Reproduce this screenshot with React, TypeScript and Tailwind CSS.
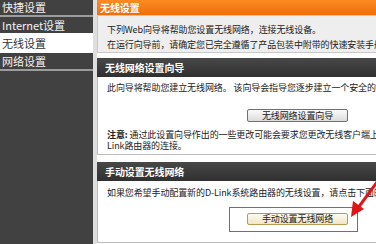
const cjk = "font-['Noto_Sans_CJK_SC','Noto_Sans',sans-serif]"

function NavItem({ label, active }: { label: string; active?: boolean }) {
  return (
    <div
      className={
        active
          ? 'h-[20px] leading-[20px] pl-[2px] text-[11px] bg-white text-[#333]'
          : 'h-[16px] leading-[16px] pl-[2px] text-[11px] text-[#f2f2f2]'
      }
    >
      {label}
    </div>
  )
}

function SectionHeader({ title }: { title: string }) {
  return (
    <div className="h-[19px] leading-[19px] pl-[8px] text-[10px] font-bold text-white bg-gradient-to-b from-[#484848] to-[#303030]">
      {title}
    </div>
  )
}

export default function App() {
  return (
    <div className={`relative flex w-[376px] h-[244px] overflow-hidden bg-white text-[#222] ${cjk}`}>
      {/* left menu */}
      <aside className="w-[93px] shrink-0 bg-[#414141] flex flex-col">
        <div className="h-[15px] leading-[15px] pl-[2px] text-[11px] text-[#f2f2f2]">快捷设置</div>
        <div className="h-[2px] bg-[#9c9c9c]" />
        <NavItem label="Internet设置" />
        <NavItem label="无线设置" active />
        <NavItem label="网络设置" />
        <div className="h-[2px] bg-[#9c9c9c]" />
      </aside>
      <div className="w-[4px] shrink-0 bg-[#dedede]" />

      <main className="w-[401px] shrink-0 flex flex-col text-[9px] tracking-[-0.1px]">
        <div className="h-[15px] leading-[15px] pl-[3px] text-[10px] font-bold text-white bg-gradient-to-b from-[#fb8a22] to-[#f06e08]">
          无线设置
        </div>
        <div className="h-[38px] border border-[#c9c9c9] bg-[#eeeeee] pl-[9px] pt-[6px] leading-[15px] whitespace-nowrap">
          <p>下列Web向导将帮助您设置无线网络，连接无线设备。</p>
          <p>在运行向导前，请确定您已完全遵循了产品包装中附带的快速安装手册上的步骤。</p>
        </div>

        <div className="mt-[5px]">
          <SectionHeader title="无线网络设置向导" />
        </div>
        <div className="h-[78px] border-x border-b border-[#bdbdbd] pl-[9px] pt-[3px] whitespace-nowrap">
          <p className="leading-[15px]">此向导将帮助您建立无线网络。 该向导会指导您逐步建立一个安全的无线网络。</p>
          <div className="flex justify-center mt-[14px] -ml-[9px]">
            <button className="w-[101px] h-[13px] leading-[11px] text-[9px] text-[#222] border border-[#707070] rounded-[2px] bg-gradient-to-b from-[#fafafa] to-[#dcdcdc]">
              无线网络设置向导
            </button>
          </div>
          <p className="mt-[7px] leading-[11px]">
            <span className="font-bold">注意:</span> 通过此设置向导作出的一些更改可能会要求您更改无线客户端上的设置，以便它们仍可以与D-
          </p>
          <p className="leading-[11px]">Link路由器的连接。</p>
        </div>

        <div className="mt-[7px]">
          <SectionHeader title="手动设置无线网络" />
        </div>
        <div className="h-[62px] border-x border-b border-[#bdbdbd] pl-[9px] pt-[4px] whitespace-nowrap">
          <p className="leading-[15px]">如果您希望手动配置新的D-Link系统路由器的无线设置，请点击下面的按钮。</p>
          <div className="flex justify-center mt-[13px] -ml-[9px]">
            <button className="w-[101px] h-[12px] leading-[10px] text-[9px] text-[#222] border border-[#b89a52] rounded-[2px] bg-gradient-to-b from-[#fdfbf0] to-[#efe6c4]">
              手动设置无线网络
            </button>
          </div>
        </div>
      </main>

      {/* annotation: red frame + arrow */}
      <div className="absolute left-[229px] top-[207px] w-[129px] h-[25px] border border-[#c05050]" />
      <svg className="absolute left-[340px] top-[176px]" width="36" height="46" viewBox="0 0 36 46">
        <line x1="40" y1="2" x2="18" y2="32" stroke="#e01515" strokeWidth="3" />
        <polygon points="11,41 13,25 24,33" fill="#e01515" />
      </svg>
    </div>
  )
}
